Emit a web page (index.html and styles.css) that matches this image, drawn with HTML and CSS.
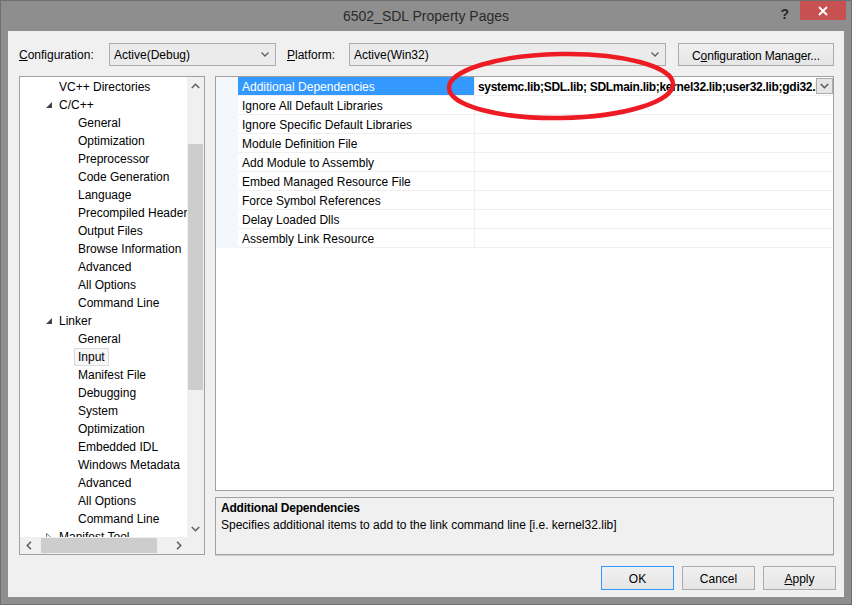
FILE: index.html
```html
<!DOCTYPE html>
<html>
<head>
<meta charset="utf-8">
<title>6502_SDL Property Pages</title>
<link rel="stylesheet" href="styles.css">
</head>
<body>
<div class="window">
  <div class="titlebar">
    <div class="title">6502_SDL Property Pages</div>
    <div class="caption-btns">
      <span class="help">?</span>
      <span class="close"><svg width="10" height="10" viewBox="0 0 10 10"><path d="M1 1 L9 9 M9 1 L1 9" stroke="#fff" stroke-width="1.8" fill="none"/></svg></span>
    </div>
  </div>
  <div class="client">
    <div class="config-row">
      <span class="lbl lbl-config"><u>C</u>onfiguration:</span>
      <div class="combo combo-config"><span class="combo-text">Active(Debug)</span><svg class="chev" width="8" height="5" viewBox="0 0 8 5"><path d="M0.5 0.5 L4 4 L7.5 0.5" stroke="#606060" stroke-width="1.3" fill="none"/></svg></div>
      <span class="lbl lbl-platform"><u>P</u>latform:</span>
      <div class="combo combo-platform"><span class="combo-text">Active(Win32)</span><svg class="chev" width="8" height="5" viewBox="0 0 8 5"><path d="M0.5 0.5 L4 4 L7.5 0.5" stroke="#606060" stroke-width="1.3" fill="none"/></svg></div>
      <button class="btn btn-cfgmgr"><span class="btn-text">C<u>o</u>nfiguration Manager...</span></button>
    </div>

    <div class="main">
      <div class="tree">
        <div class="tree-rows">
          <div class="trow l0"><span class="tog"></span><span class="tlabel">VC++ Directories</span></div>
          <div class="trow l0"><span class="tog"><svg width="6" height="6" viewBox="0 0 6 6"><polygon points="6,0 6,6 0,6" fill="#444"/></svg></span><span class="tlabel">C/C++</span></div>
          <div class="trow l1"><span class="tlabel">General</span></div>
          <div class="trow l1"><span class="tlabel">Optimization</span></div>
          <div class="trow l1"><span class="tlabel">Preprocessor</span></div>
          <div class="trow l1"><span class="tlabel">Code Generation</span></div>
          <div class="trow l1"><span class="tlabel">Language</span></div>
          <div class="trow l1"><span class="tlabel">Precompiled Header</span></div>
          <div class="trow l1"><span class="tlabel">Output Files</span></div>
          <div class="trow l1"><span class="tlabel">Browse Information</span></div>
          <div class="trow l1"><span class="tlabel">Advanced</span></div>
          <div class="trow l1"><span class="tlabel">All Options</span></div>
          <div class="trow l1"><span class="tlabel">Command Line</span></div>
          <div class="trow l0"><span class="tog"><svg width="6" height="6" viewBox="0 0 6 6"><polygon points="6,0 6,6 0,6" fill="#444"/></svg></span><span class="tlabel">Linker</span></div>
          <div class="trow l1"><span class="tlabel">General</span></div>
          <div class="trow l1"><span class="tlabel tsel">Input</span></div>
          <div class="trow l1"><span class="tlabel">Manifest File</span></div>
          <div class="trow l1"><span class="tlabel">Debugging</span></div>
          <div class="trow l1"><span class="tlabel">System</span></div>
          <div class="trow l1"><span class="tlabel">Optimization</span></div>
          <div class="trow l1"><span class="tlabel">Embedded IDL</span></div>
          <div class="trow l1"><span class="tlabel">Windows Metadata</span></div>
          <div class="trow l1"><span class="tlabel">Advanced</span></div>
          <div class="trow l1"><span class="tlabel">All Options</span></div>
          <div class="trow l1"><span class="tlabel">Command Line</span></div>
          <div class="trow l0"><span class="tog"><svg width="5" height="8" viewBox="0 0 5 8"><polygon points="0.5,0.5 4.5,4 0.5,7.5" fill="#fff" stroke="#777" stroke-width="1"/></svg></span><span class="tlabel">Manifest Tool</span></div>
        </div>
        <div class="vscroll">
          <div class="sarrow"><svg width="9" height="6" viewBox="0 0 9 6"><path d="M0.8 5 L4.5 1.3 L8.2 5" stroke="#606060" stroke-width="1.6" fill="none"/></svg></div>
          <div class="vtrack"><div class="vthumb"></div></div>
          <div class="sarrow"><svg width="9" height="6" viewBox="0 0 9 6"><path d="M0.8 1 L4.5 4.7 L8.2 1" stroke="#606060" stroke-width="1.6" fill="none"/></svg></div>
        </div>
        <div class="hscroll">
          <div class="sarrow"><svg width="6" height="9" viewBox="0 0 6 9"><path d="M5 0.8 L1.3 4.5 L5 8.2" stroke="#606060" stroke-width="1.6" fill="none"/></svg></div>
          <div class="htrack"><div class="hthumb"></div></div>
          <div class="sarrow"><svg width="6" height="9" viewBox="0 0 6 9"><path d="M1 0.8 L4.7 4.5 L1 8.2" stroke="#606060" stroke-width="1.6" fill="none"/></svg></div>
        </div>
        <div class="corner"></div>
      </div>

      <div class="right">
        <div class="grid">
          <div class="prop selected"><div class="gutter"></div><div class="pname">Additional Dependencies</div><div class="pval"><span class="pval-text">systemc.lib;SDL.lib; SDLmain.lib;kernel32.lib;user32.lib;gdi32.lib;winspool.lib;comdlg32.lib;advapi32.lib</span><span class="dd"><svg width="9" height="6" viewBox="0 0 9 6"><path d="M0.8 1 L4.5 4.7 L8.2 1" stroke="#555" stroke-width="1.5" fill="none"/></svg></span></div></div>
          <div class="prop"><div class="gutter"></div><div class="pname">Ignore All Default Libraries</div><div class="pval"></div></div>
          <div class="prop"><div class="gutter"></div><div class="pname">Ignore Specific Default Libraries</div><div class="pval"></div></div>
          <div class="prop"><div class="gutter"></div><div class="pname">Module Definition File</div><div class="pval"></div></div>
          <div class="prop"><div class="gutter"></div><div class="pname">Add Module to Assembly</div><div class="pval"></div></div>
          <div class="prop"><div class="gutter"></div><div class="pname">Embed Managed Resource File</div><div class="pval"></div></div>
          <div class="prop"><div class="gutter"></div><div class="pname">Force Symbol References</div><div class="pval"></div></div>
          <div class="prop"><div class="gutter"></div><div class="pname">Delay Loaded Dlls</div><div class="pval"></div></div>
          <div class="prop"><div class="gutter"></div><div class="pname">Assembly Link Resource</div><div class="pval"></div></div>
        </div>
        <div class="desc">
          <div class="desc-title">Additional Dependencies</div>
          <div class="desc-text">Specifies additional items to add to the link command line [i.e. kernel32.lib]</div>
        </div>
      </div>
    </div>

    <div class="buttons">
      <button class="btn dlg-btn default"><span class="btn-text">OK</span></button>
      <button class="btn dlg-btn"><span class="btn-text">Cancel</span></button>
      <button class="btn dlg-btn"><span class="btn-text"><u>A</u>pply</span></button>
    </div>
  </div>

  <svg class="annotation" width="852" height="605" viewBox="0 0 852 605">
    <ellipse cx="561" cy="86" rx="112" ry="32" fill="none" stroke="#ed1c24" stroke-width="4.5" transform="rotate(-1 561 86)"/>
  </svg>
</div>
</body>
</html>
```

FILE: styles.css
```css
* { box-sizing: border-box; }
html, body { margin: 0; padding: 0; }
body {
  width: 852px;
  height: 605px;
  overflow: hidden;
  background: #8e8e8e;
  font-family: "Liberation Sans", Arial, sans-serif;
  font-size: 12px;
  color: #000;
}
u { text-decoration: underline; text-underline-offset: 1px; }

.window {
  position: relative;
  width: 852px;
  height: 605px;
  border: 1px solid #6f6f6f;
  background: #8e8e8e;
  display: flex;
  flex-direction: column;
}

.titlebar {
  height: 30px;
  display: grid;
  grid-template-columns: 1fr auto 1fr;
  align-items: start;
}
.title {
  grid-column: 2;
  font-size: 14px;
  color: #2b2b2b;
  line-height: 30px;
}
.caption-btns {
  grid-column: 3;
  justify-self: end;
  display: flex;
  align-items: flex-start;
  margin-right: 5px;
}
.help {
  font-size: 14px;
  font-weight: bold;
  color: #2a2a2a;
  line-height: 14px;
  margin-top: 6px;
  margin-right: 11px;
}
.close {
  width: 46px;
  height: 19px;
  background: #c75050;
  display: flex;
  align-items: center;
  justify-content: center;
}

.client {
  margin: 0 7px 7px 7px;
  height: 566px;
  background: #f0f0f0;
  padding: 12px 10px 7px 11px;
  display: flex;
  flex-direction: column;
}

.config-row {
  height: 23px;
  display: flex;
  align-items: center;
}
.lbl { line-height: 19px; padding-top: 2px; }
.lbl-config { width: 90px; }
.lbl-platform { width: 62px; margin-left: 11px; }
.combo {
  height: 23px;
  border: 1px solid #acacac;
  background: #ebebeb;
  display: flex;
  align-items: center;
  padding: 0 6px 0 4px;
}
.combo-text { flex: 1; padding-top: 2px; line-height: 17px; }
.combo-config { width: 167px; }
.combo-platform { width: 317px; }
.chev { flex: none; }

.btn {
  font-family: "Liberation Sans", Arial, sans-serif;
  font-size: 12px;
  color: #000;
  border: 1px solid #acacac;
  background: linear-gradient(#f0f0f0, #e5e5e5);
  padding: 0;
  margin: 0;
}
.btn-text { display: block; padding-top: 2px; line-height: 16px; }
.btn-cfgmgr {
  margin-left: 12px;
  width: 156px;
  height: 23px;
  letter-spacing: -0.15px;
}

.main {
  margin-top: 10px;
  height: 479px;
  display: flex;
  gap: 10px;
}

/* tree */
.tree {
  width: 186px;
  height: 479px;
  border: 1px solid #a0a0a0;
  background: #fff;
  display: grid;
  grid-template-columns: 1fr 17px;
  grid-template-rows: 460px 17px;
}
.tree-rows {
  overflow: hidden;
  background: #fff;
  padding-top: 1px;
}
.trow {
  height: 18px;
  display: flex;
  align-items: center;
  white-space: nowrap;
  line-height: 18px;
}
.trow.l0 { padding-left: 26px; }
.trow.l1 { padding-left: 58px; }
.tog {
  width: 13px;
  height: 18px;
  display: flex;
  align-items: center;
  padding-bottom: 1px;
}
.tsel {
  margin-left: -4px;
  padding: 0 3px;
  height: 18px;
  line-height: 16px;
  border: 1px solid #dadada;
  background: #f7f7f7;
}

.vscroll {
  background: #f0f0f0;
  display: flex;
  flex-direction: column;
}
.sarrow {
  width: 17px;
  height: 17px;
  display: flex;
  align-items: center;
  justify-content: center;
  flex: none;
}
.vtrack { flex: 1; padding: 50px 1px 0 1px; }
.vthumb { height: 246px; background: #cdcdcd; }

.hscroll {
  background: #f0f0f0;
  display: flex;
}
.htrack { flex: 1; padding: 1px 0 1px 4px; }
.hthumb { width: 116px; height: 15px; background: #cdcdcd; }
.corner { background: #f0f0f0; }

/* right side */
.right {
  width: 619px;
  display: flex;
  flex-direction: column;
}
.grid {
  height: 415px;
  border: 1px solid #a0a0a0;
  background: #fff;
}
.prop {
  display: grid;
  grid-template-columns: 22px 237px 1fr;
  height: 19px;
}
.gutter { background: #f4f7fc; }
.pname {
  border-bottom: 1px solid #f0f0f0;
  border-right: 1px solid #f0f0f0;
  padding: 2px 0 0 4px;
  line-height: 16px;
  white-space: nowrap;
  overflow: hidden;
}
.pval {
  border-bottom: 1px solid #f0f0f0;
  display: flex;
  align-items: center;
  padding-left: 3px;
  overflow: hidden;
}
.selected .pname {
  background: #3399ff;
  color: #fff;
}
.pval-text {
  flex: 1;
  font-weight: bold;
  letter-spacing: -0.3px;
  white-space: nowrap;
  overflow: hidden;
  padding-top: 2px;
  line-height: 16px;
}
.dd {
  flex: none;
  width: 17px;
  height: 16px;
  border: 1px solid #acacac;
  background: #e6e6e6;
  display: flex;
  align-items: center;
  justify-content: center;
}

.desc {
  margin-top: 6px;
  height: 58px;
  border: 1px solid #a0a0a0;
  box-shadow: 0 1px 0 #d0d0d0;
  background: #f0f0f0;
  padding: 2px 5px 0 5px;
  line-height: 17px;
}
.desc-title { font-weight: bold; letter-spacing: -0.2px; }

.buttons {
  margin-top: 11px;
  margin-right: -2px;
  height: 24px;
  display: flex;
  justify-content: flex-end;
  gap: 8px;
}
.dlg-btn {
  width: 73px;
  height: 24px;
}
.dlg-btn.default { border-color: #3399ff; }

.annotation {
  position: absolute;
  left: -1px;
  top: -1px;
  pointer-events: none;
}
```
